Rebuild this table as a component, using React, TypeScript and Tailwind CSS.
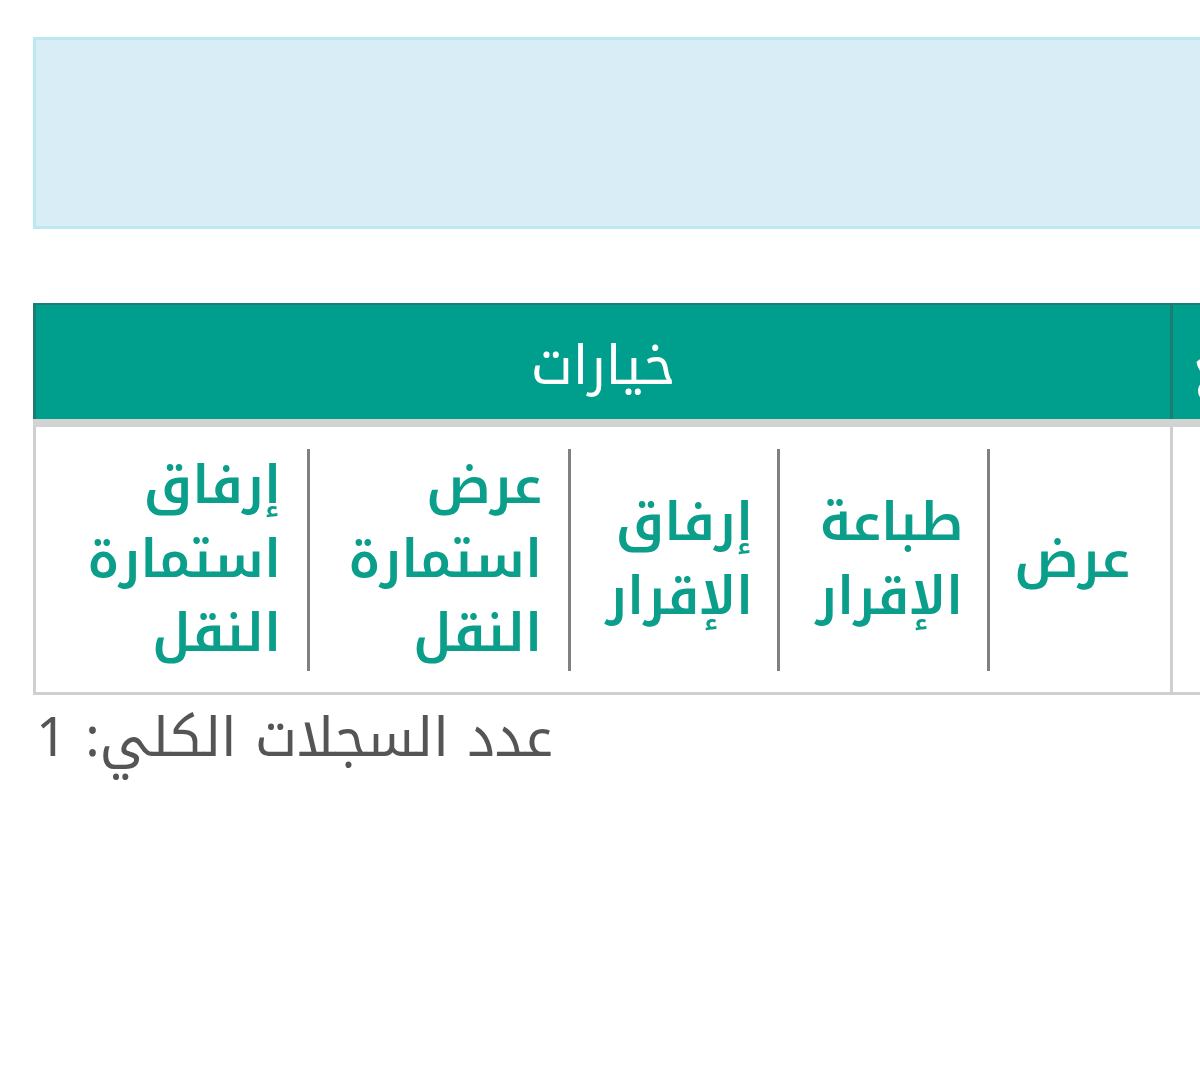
import React from 'react';

const actions = [
  { lines: ['عرض'], cls: 'w-[183px] pr-[40px] border-l-[3px] border-l-[#808080]' },
  { lines: ['طباعة', 'الإقرار'], cls: 'w-[210px] pr-[24px] border-l-[3px] border-l-[#808080]' },
  { lines: ['إرفاق', 'الإقرار'], cls: 'w-[209px] pr-[24px] border-l-[3px] border-l-[#808080]' },
  { lines: ['عرض', 'استمارة', 'النقل'], cls: 'w-[261px] pr-[26px] border-l-[3px] border-l-[#808080]' },
  { lines: ['إرفاق', 'استمارة', 'النقل'], cls: 'flex-1 pr-[26px]' },
];

const App = () => {
  return (
    <div className="min-h-screen w-full overflow-hidden bg-white" style={{ fontFamily: '"Noto Kufi Arabic", "DejaVu Sans", sans-serif' }}>
      <div className="pt-[37px] pl-[33px]">
        <div dir="rtl" className="w-[1600px]">
          {/* Info alert */}
          <div className="h-[192px] border-[3px] border-[#bce8f1] bg-[#d9edf7]"></div>

          {/* Records table */}
          <table className="mt-[74px] w-full border-collapse">
            <thead>
              <tr className="bg-[#009e8d] text-white">
                <th className="h-[119px] border-t-2 border-t-[#1c7d70] border-l-[3px] border-l-[#1c7d70] border-r-[3px] border-r-[#1c7d70] pt-[8px] pl-[20px] text-left text-[54px] leading-[74px] font-normal">
                  الموقع
                </th>
                <th className="w-[1137px] h-[119px] border-t-2 border-t-[#1c7d70] border-l-[3px] border-l-[#1c7d70] pt-[8px] text-center text-[54px] leading-[74px] font-normal">
                  خيارات
                </th>
              </tr>
            </thead>
            <tbody>
              <tr className="border-t-[8px] border-t-[#d3d3d3]">
                <td className="border-r-[3px] border-r-[#cfcfcf] border-l-[3px] border-l-[#cfcfcf] border-b-[3px] border-b-[#cfcfcf]"></td>
                <td className="border-l-[3px] border-l-[#cfcfcf] border-b-[3px] border-b-[#cfcfcf] pt-[22px] pb-[21px]">
                  <div className="flex items-stretch">
                    {actions.map((item, i) => (
                      <a
                        key={i}
                        href="#"
                        className={`flex shrink-0 flex-col justify-center text-[52px] font-semibold leading-[74px] text-[#0b9e8b] ${item.cls}`}
                      >
                        {item.lines.map((line, j) => (
                          <span key={j} className="block whitespace-nowrap">{line}</span>
                        ))}
                      </a>
                    ))}
                  </div>
                </td>
              </tr>
            </tbody>
          </table>

          <div className="pt-[6px] pl-[3px] text-left text-[54px] leading-[74px] text-[#555555]">
            عدد السجلات الكلي: 1
          </div>
        </div>
      </div>
    </div>
  );
};

export default App;
